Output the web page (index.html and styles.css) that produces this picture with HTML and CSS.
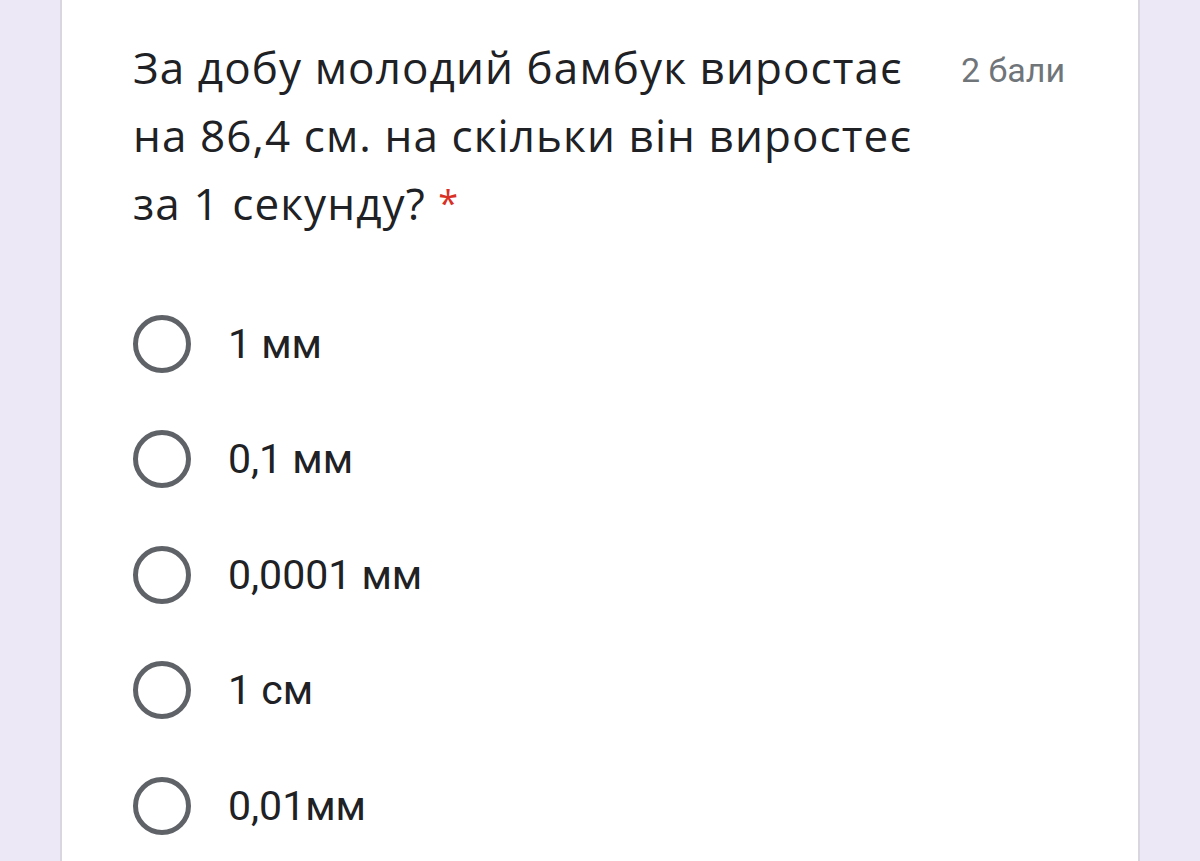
FILE: index.html
```html
<!DOCTYPE html>
<html lang="uk">
<head>
<meta charset="utf-8">
<link rel="stylesheet" href="styles.css">
</head>
<body>
<div class="card">
  <div class="head">
    <div class="title">За добу молодий бамбук виростає<br>на 86,4 см. на скільки він виростеє<br>за 1 секунду? <span class="req">*</span></div>
    <div class="points">2 бали</div>
  </div>
  <div class="options">
    <div class="opt"><span class="radio"></span><span class="label">1 мм</span></div>
    <div class="opt"><span class="radio"></span><span class="label">0,1 мм</span></div>
    <div class="opt"><span class="radio"></span><span class="label">0,0001 мм</span></div>
    <div class="opt"><span class="radio"></span><span class="label">1 см</span></div>
    <div class="opt"><span class="radio"></span><span class="label">0,01мм</span></div>
  </div>
</div>
</body>
</html>
```
FILE: styles.css
```css
html, body { margin: 0; padding: 0; }
body {
  background: #ece8f6;
  height: 861px;
  overflow: hidden;
}
.card {
  margin: 0 60px;
  height: 861px;
  background: #fff;
  border-left: 2px solid #d9d6e0;
  border-right: 2px solid #d9d6e0;
  padding: 33px 0 0 71px;
  box-sizing: border-box;
}
.head {
  display: flex;
  align-items: flex-start;
}
.title {
  font-family: "Open Sans", sans-serif;
  font-size: 44px;
  letter-spacing: 1.1px;
  line-height: 68px;
  color: #202124;
  width: 828px;
}
.req { color: #d93025; font-size: 36px; position: relative; top: -4px; letter-spacing: 0; }
.points {
  font-family: Roboto, sans-serif;
  font-size: 34px;
  color: #70757a;
  padding-top: 17px;
}
.options {
  margin-top: 45px;
}
.opt {
  display: flex;
  align-items: center;
  height: 115.5px;
}
.radio {
  width: 58px;
  height: 58px;
  box-sizing: border-box;
  border: 5.5px solid #5f6368;
  border-radius: 50%;
  flex: none;
}
.label {
  margin-left: 37px;
  font-family: Roboto, sans-serif;
  font-size: 41px;
  color: #202124;
}
```
